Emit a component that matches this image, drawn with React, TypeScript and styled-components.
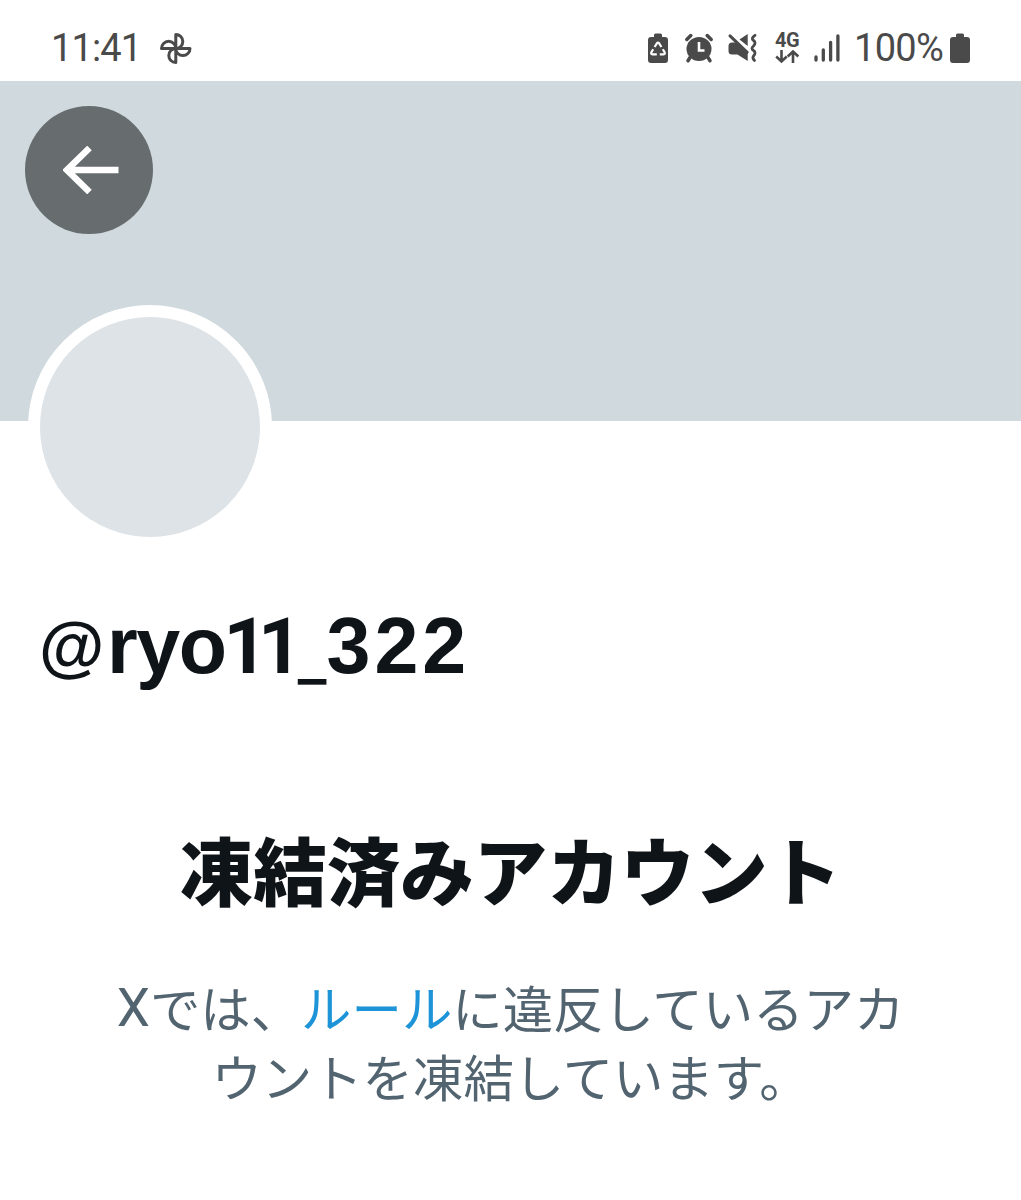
import React from "react";
import styled, { createGlobalStyle } from "styled-components";

const GlobalStyle = createGlobalStyle`
  * { box-sizing: border-box; }
  html, body { margin: 0; background: #fff; }
  body { font-family: Roboto, "Noto Sans CJK JP", sans-serif; }
`;

const Screen = styled.div`
  display: flex;
  flex-direction: column;
  width: 1021px;
  height: 1200px;
  overflow: hidden;
  background: #fff;
`;

const StatusBar = styled.div`
  display: flex;
  justify-content: space-between;
  height: 81px;
  padding: 28px 50px 0 51px;
  color: #4a4a4a;
`;

const StatusGroup = styled.div`
  display: flex;
  align-items: flex-start;
  height: 40px;
`;

const StatusText = styled.span<{ $width: number; $gap?: number; $track: number }>`
  width: ${(p) => p.$width}px;
  margin-left: ${(p) => p.$gap ?? 0}px;
  font: 400 38px/40px Roboto, sans-serif;
  letter-spacing: ${(p) => p.$track}px;
  white-space: nowrap;
`;

const Glyph = styled.svg<{ $gap?: number }>`
  display: block;
  flex: none;
  height: 40px;
  margin-left: ${(p) => p.$gap ?? 0}px;
  overflow: visible;
`;

const NetworkBadge = styled.div`
  display: flex;
  flex-direction: column;
  align-items: center;
  width: 26px;
  height: 40px;
  margin-left: 16px;
  padding-top: 4px;
`;

const NetworkLabel = styled.span`
  font: 700 20px/17px Roboto, sans-serif;
  letter-spacing: -0.5px;
`;

const Banner = styled.header`
  flex: none;
  height: 340px;
  padding: 25px;
  background: #cfd9de;
`;

const BackButton = styled.button`
  display: flex;
  align-items: center;
  justify-content: center;
  width: 128px;
  height: 128px;
  padding: 0 0 0 3px;
  border: 0;
  border-radius: 50%;
  background: #676d6f;
`;

const Profile = styled.section`
  padding: 0 28px;
`;

const Avatar = styled.div`
  width: 244px;
  height: 244px;
  margin-top: -116px;
  border: 12px solid #fff;
  border-radius: 50%;
  background: #dde3e7;
`;

const Handle = styled.h1`
  display: flex;
  align-items: baseline;
  height: 96px;
  margin: 49px 0 0 12px;
  color: #0f1419;
  font: 700 79px/96px "Liberation Sans", sans-serif;
  white-space: nowrap;
`;

const HandleLetters = styled.span<{ $track?: number }>`
  letter-spacing: ${(p) => p.$track ?? 0}px;
`;

const AtSign = styled.span`
  width: 65px;
  margin-right: 2px;
  font-size: 67px;
  line-height: 1;
  transform: translate(-1px, -4px);
`;

const HandleOnes = styled.span`
  font-family: Roboto, sans-serif;
  font-size: 77px;
  letter-spacing: -9.5px;
  margin-left: -2px;
`;

const Underscore = styled.span`
  margin-left: 5px;
  font: 500 62px/1 Inter, sans-serif;
  transform: translateY(6px);
`;

const Notice = styled.section`
  margin-top: 128px;
  text-align: center;
`;

const NoticeTitle = styled.h2`
  margin: 0;
  color: #0f1419;
  font: 900 73.5px/92px "Noto Sans CJK JP", sans-serif;
`;

const NoticeText = styled.p`
  margin: 58px 0 0;
  color: #536471;
  font: 400 50.4px/69px "Noto Sans CJK JP", sans-serif;
`;

const Latin = styled.span`
  font: 400 53px/1 Roboto, sans-serif;
  vertical-align: 2px;
`;

const RuleLink = styled.a`
  color: #1d93d8;
`;

export default function App() {
  return (
    <Screen>
      <GlobalStyle />
      <StatusBar>
        <StatusGroup>
          <StatusText $width={108} $track={-0.9}>11:41</StatusText>
          <Glyph width="34" viewBox="0 0 34 40" fill="none" stroke="#4a4a4a" strokeWidth="3" strokeLinejoin="round">
            <path d="M16.800 6.500a7 7 0 0 1 0 14zM31 20.500a7 7 0 0 1-14.200 0zM16.800 34.500a7 7 0 0 1 0-14zM2.500 20.500a7 7 0 0 1 14.300 0z" />
          </Glyph>
        </StatusGroup>
        <StatusGroup>
          <Glyph width="22" viewBox="0 0 22 40">
            <path d="M7 9V7q0-1.500 1.500-1.500h5q1.500 0 1.500 1.500v2h3q3 0 3 3v20q0 3-3 3H4q-3 0-3-3V12q0-3 3-3z" fill="#4a4a4a" />
            <path d="M7.600 19 10 15.200q1-1.400 2 0l2.400 3.800M15.800 21.300l1.800 3q.8 2-1 2H12.800M9.800 26.300H5.400q-1.800 0-1-2l1.800-3" fill="none" stroke="#fff" strokeWidth="2.200" />
          </Glyph>
          <Glyph $gap={15} width="30" viewBox="0 0 30 40">
            <g stroke="#4a4a4a" strokeWidth="3.500" strokeLinecap="round">
              <path d="M2.800 11.500l4-4M23.200 7.500l4 4M6 29.500l-2 3.200M24 29.500l2 3.200" />
            </g>
            <ellipse cx="15" cy="21" rx="12.500" ry="12" fill="#4a4a4a" />
            <path d="M15 14v8.500h5.500" fill="none" stroke="#fff" strokeWidth="2.600" />
          </Glyph>
          <Glyph $gap={14} width="30" viewBox="0 0 30 40" fill="#4a4a4a">
            <path d="M4 14.500h4.500L19.700 24v9L9.500 26.500H4Q.5 26.500.5 23v-5Q.5 14.500 4 14.500zM11.500 11.500 19.700 6v12z" />
            <path d="M2 7.800l17.200 16.500" fill="none" stroke="#4a4a4a" strokeWidth="3" strokeLinecap="round" />
            <path d="M27 7.300Q22.500 10.500 25.500 12.500T25.500 18Q22.500 20.500 25.500 22.500T25.500 28Q24 30 26.500 32.500" fill="none" stroke="#4a4a4a" strokeWidth="2.800" strokeLinecap="round" />
          </Glyph>
          <NetworkBadge>
            <NetworkLabel>4G</NetworkLabel>
            <svg width="24" height="15" viewBox="0 0 24 15" fill="none" stroke="#4a4a4a" strokeWidth="2.600">
              <path d="M6.500 1v11M1.200 7.500l5.300 5 5.300-5M18 14V3M12.700 7.500l5.300-5 5.300 5" />
            </svg>
          </NetworkBadge>
          <Glyph $gap={14} width="28" viewBox="0 0 28 40" stroke="#4a4a4a" strokeWidth="3.300" strokeLinecap="round">
            <path d="M2 29v3M9.300 21.800V32M16.600 14.300V32M23.900 7.800V32" />
          </Glyph>
          <StatusText $width={96} $gap={12} $track={-0.7}>100%</StatusText>
          <Glyph width="21" viewBox="0 0 21 40" fill="#4a4a4a">
            <path d="M6 9V7q0-1.500 1.500-1.500h5q1.500 0 1.500 1.500v2h3q3 0 3 3v20q0 3-3 3H3q-3 0-3-3V12q0-3 3-3z" />
          </Glyph>
        </StatusGroup>
      </StatusBar>
      <Banner>
        <BackButton aria-label="戻る">
          <svg width="56" height="48" viewBox="0 0 56 48" fill="none" stroke="#fff" strokeWidth="6.500">
            <path d="M55.500 24H6M26.500 2 4 24l22.500 22" />
          </svg>
        </BackButton>
      </Banner>
      <Profile>
        <Avatar />
        <Handle>
          <AtSign>@</AtSign>
          <HandleLetters $track={-1.5}>ryo</HandleLetters>
          <HandleOnes>11</HandleOnes>
          <Underscore>_</Underscore>
          <HandleLetters $track={4}>322</HandleLetters>
        </Handle>
      </Profile>
      <Notice>
        <NoticeTitle>凍結済みアカウント</NoticeTitle>
        <NoticeText>
          <Latin>X</Latin>では、<RuleLink>ルール</RuleLink>に違反しているアカ
          <br />
          ウントを凍結しています。
        </NoticeText>
      </Notice>
    </Screen>
  );
}
